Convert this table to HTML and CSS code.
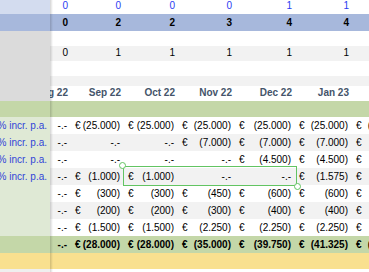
FILE: index.html
```html
<!DOCTYPE html>
<html>
<head>
<meta charset="utf-8">
<link rel="stylesheet" href="styles.css">
</head>
<body>
<div class="sheet">
  <div class="row h14">
    <div class="pane pane-lblue"></div>
    <div class="c num blue">0</div><div class="c num blue">0</div><div class="c num blue">0</div><div class="c num blue">0</div><div class="c num blue">1</div><div class="c num blue">1</div><div class="c num blue"></div>
  </div>
  <div class="row h17 bg-blue bold">
    <div class="pane"></div>
    <div class="c num">0</div><div class="c num">2</div><div class="c num">2</div><div class="c num">3</div><div class="c num">4</div><div class="c num">4</div><div class="c num"></div>
  </div>
  <div class="row h15">
    <div class="pane pane-grey"></div>
    <div class="c"></div><div class="c"></div><div class="c"></div><div class="c"></div><div class="c"></div><div class="c"></div><div class="c"></div>
  </div>
  <div class="row h15 bg-alt">
    <div class="pane pane-grey"></div>
    <div class="c num">0</div><div class="c num">1</div><div class="c num">1</div><div class="c num">1</div><div class="c num">1</div><div class="c num">1</div><div class="c num"></div>
  </div>
  <div class="row h15">
    <div class="pane pane-grey"></div>
    <div class="c"></div><div class="c"></div><div class="c"></div><div class="c"></div><div class="c"></div><div class="c"></div><div class="c"></div>
  </div>
  <div class="row h10 bg-alt">
    <div class="pane pane-grey"></div>
    <div class="c"></div><div class="c"></div><div class="c"></div><div class="c"></div><div class="c"></div><div class="c"></div><div class="c"></div>
  </div>
  <div class="row h15 head">
    <div class="pane pane-grey"></div>
    <div class="c num">Aug 22</div><div class="c num">Sep 22</div><div class="c num">Oct 22</div><div class="c num">Nov 22</div><div class="c num">Dec 22</div><div class="c num">Jan 23</div><div class="c num"></div>
  </div>
  <div class="row h16 bg-green">
    <div class="pane"></div>
    <div class="c"></div><div class="c"></div><div class="c"></div><div class="c"></div><div class="c"></div><div class="c"></div><div class="c"></div>
  </div>

  <div class="row h17">
    <div class="pane pane-lgreen lbl">% incr. p.a.</div>
    <div class="c">-.-</div>
    <div class="c acc"><span>€</span><span>(25.000)</span></div>
    <div class="c acc"><span>€</span><span>(25.000)</span></div>
    <div class="c acc"><span>€</span><span>(25.000)</span></div>
    <div class="c acc"><span>€</span><span>(25.000)</span></div>
    <div class="c acc"><span>€</span><span>(25.000)</span></div>
    <div class="c acc"><span>€</span><span>(25.000)</span></div>
  </div>
  <div class="row h17 bg-alt">
    <div class="pane pane-lgreen lbl">% incr. p.a.</div>
    <div class="c">-.-</div>
    <div class="c">-.-</div>
    <div class="c">-.-</div>
    <div class="c acc"><span>€</span><span>(7.000)</span></div>
    <div class="c acc"><span>€</span><span>(7.000)</span></div>
    <div class="c acc"><span>€</span><span>(7.000)</span></div>
    <div class="c acc"><span>€</span><span>(7.000)</span></div>
  </div>
  <div class="row h17">
    <div class="pane pane-lgreen lbl">% incr. p.a.</div>
    <div class="c">-.-</div>
    <div class="c">-.-</div>
    <div class="c">-.-</div>
    <div class="c">-.-</div>
    <div class="c acc"><span>€</span><span>(4.500)</span></div>
    <div class="c acc"><span>€</span><span>(4.500)</span></div>
    <div class="c acc"><span>€</span><span>(4.500)</span></div>
  </div>
  <div class="row h17 bg-alt">
    <div class="pane pane-lgreen lbl">% incr. p.a.</div>
    <div class="c">-.-</div>
    <div class="c acc"><span>€</span><span>(1.000)</span></div>
    <div class="c acc"><span>€</span><span>(1.000)</span></div>
    <div class="c">-.-</div>
    <div class="c">-.-</div>
    <div class="c acc"><span>€</span><span>(1.575)</span></div>
    <div class="c acc"><span>€</span><span>(1.575)</span></div>
  </div>
  <div class="row h17">
    <div class="pane pane-lgreen"></div>
    <div class="c">-.-</div>
    <div class="c acc"><span>€</span><span>(300)</span></div>
    <div class="c acc"><span>€</span><span>(300)</span></div>
    <div class="c acc"><span>€</span><span>(450)</span></div>
    <div class="c acc"><span>€</span><span>(600)</span></div>
    <div class="c acc"><span>€</span><span>(600)</span></div>
    <div class="c acc"><span>€</span><span>(600)</span></div>
  </div>
  <div class="row h17 bg-alt">
    <div class="pane pane-lgreen"></div>
    <div class="c">-.-</div>
    <div class="c acc"><span>€</span><span>(200)</span></div>
    <div class="c acc"><span>€</span><span>(200)</span></div>
    <div class="c acc"><span>€</span><span>(300)</span></div>
    <div class="c acc"><span>€</span><span>(400)</span></div>
    <div class="c acc"><span>€</span><span>(400)</span></div>
    <div class="c acc"><span>€</span><span>(400)</span></div>
  </div>
  <div class="row h17">
    <div class="pane pane-lgreen"></div>
    <div class="c">-.-</div>
    <div class="c acc"><span>€</span><span>(1.500)</span></div>
    <div class="c acc"><span>€</span><span>(1.500)</span></div>
    <div class="c acc"><span>€</span><span>(2.250)</span></div>
    <div class="c acc"><span>€</span><span>(2.250)</span></div>
    <div class="c acc"><span>€</span><span>(2.250)</span></div>
    <div class="c acc"><span>€</span><span>(2.250)</span></div>
  </div>
  <div class="row h17 bg-green bold">
    <div class="pane"></div>
    <div class="c">-.-</div>
    <div class="c acc"><span>€</span><span>(28.000)</span></div>
    <div class="c acc"><span>€</span><span>(28.000)</span></div>
    <div class="c acc"><span>€</span><span>(35.000)</span></div>
    <div class="c acc"><span>€</span><span>(39.750)</span></div>
    <div class="c acc"><span>€</span><span>(41.325)</span></div>
    <div class="c acc"><span>€</span><span>(41.325)</span></div>
  </div>
  <div class="row h16 bg-yellow">
    <div class="pane"></div>
    <div class="c"></div><div class="c"></div><div class="c"></div><div class="c"></div><div class="c"></div><div class="c"></div><div class="c"></div>
  </div>
  <div class="row h3">
    <div class="pane pane-end"></div>
    <div class="c"></div><div class="c"></div><div class="c"></div><div class="c"></div><div class="c"></div><div class="c"></div><div class="c"></div>
  </div>

  <div class="sel"></div>
</div>
</body>
</html>
```
FILE: styles.css
```css
html, body {
  margin: 0;
  padding: 0;
  background: #ffffff;
}

body {
  font-family: "Liberation Sans", Arial, sans-serif;
  font-size: 10px;
  color: #000000;
}

.sheet {
  position: relative;
  width: 369px;
  height: 272px;
  overflow: hidden;
}

.row {
  display: grid;
  grid-template-columns: 50px 21px 53px 54px 57px 60px 57px 57px;
  background: #ffffff;
}

.h3 { height: 3px; }
.h10 { height: 10px; }
.h14 { height: 14px; }
.h15 { height: 15px; }
.h16 { height: 16px; }
.h17 { height: 17px; }

.bg-alt { background: #f2f2f2; }
.bg-blue { background: #a7b8dc; }
.bg-green { background: #c4d7a8; }
.bg-yellow { background: #f9e08f; }

.bold { font-weight: bold; }

.pane {
  display: flex;
  align-items: flex-end;
  justify-content: flex-end;
  overflow: hidden;
  white-space: nowrap;
  line-height: 11px;
  padding: 0 3px 3px 0;
  min-width: 0;
}

.pane-lblue { background: #d3dcef; }
.pane-grey { background: #dbdbdb; }
.pane-lgreen { background: #dfe9d5; }
.pane-end { background: #efefef; }

.lbl {
  color: #2f44d8;
}

.c {
  display: flex;
  align-items: flex-end;
  justify-content: flex-end;
  padding: 0 4px 3px 4px;
  line-height: 11px;
  overflow: hidden;
  white-space: nowrap;
  min-width: 0;
}

.c.num {
  padding-right: 3px;
}

.row > .c:nth-child(2) {
  background-image: linear-gradient(to right, rgba(0, 0, 0, 0.17), rgba(0, 0, 0, 0) 3px);
}

.acc {
  justify-content: space-between;
}

.blue {
  color: #2a3cf2;
}

.head .c {
  font-weight: bold;
  color: #44546a;
}

.sel {
  position: absolute;
  left: 123px;
  top: 166px;
  width: 172px;
  height: 18px;
  border: 1.5px solid #62c462;
}

.sel::before,
.sel::after {
  content: "";
  position: absolute;
  width: 5px;
  height: 5px;
  border-radius: 50%;
  background: #ffffff;
  border: 1.2px solid #62c462;
}

.sel::before {
  left: -5px;
  top: -5px;
}

.sel::after {
  right: -5px;
  bottom: -5px;
}
```
